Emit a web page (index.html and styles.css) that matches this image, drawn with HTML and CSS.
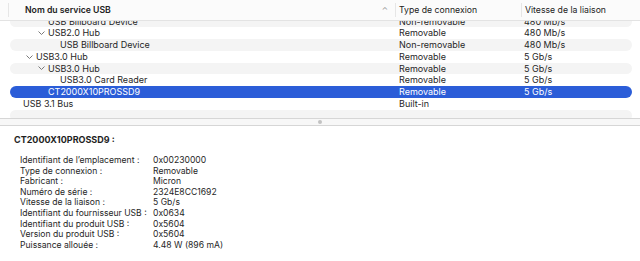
FILE: index.html
```html
<!DOCTYPE html>
<html lang="fr">
<head>
  <meta charset="UTF-8">
  <title>Informations système - USB</title>
  <link rel="stylesheet" href="styles.css">
</head>
<body>
  <div class="fenetre">
    <div class="tableau">
      <div class="entete">
        <div class="col-nom">
          <span>Nom du service USB</span>
          <span class="tri">&#8963;</span>
        </div>
        <div class="col-type">Type de connexion</div>
        <div class="col-vitesse">Vitesse de la liaison</div>
      </div>
      <div class="corps">
        <div class="liste">
          <div class="ligne raye">
            <div class="nom n2">USB Billboard Device</div>
            <div>Non-removable</div>
            <div>480 Mb/s</div>
          </div>
          <div class="ligne">
            <div class="nom n2"><span class="chevron"><svg width="7" height="4" viewBox="0 0 7 4"><polyline points="0.5,0.5 3.5,3.5 6.5,0.5" /></svg></span>USB2.0 Hub</div>
            <div>Removable</div>
            <div>480 Mb/s</div>
          </div>
          <div class="ligne raye">
            <div class="nom n3">USB Billboard Device</div>
            <div>Non-removable</div>
            <div>480 Mb/s</div>
          </div>
          <div class="ligne">
            <div class="nom n1"><span class="chevron"><svg width="7" height="4" viewBox="0 0 7 4"><polyline points="0.5,0.5 3.5,3.5 6.5,0.5" /></svg></span>USB3.0 Hub</div>
            <div>Removable</div>
            <div>5 Gb/s</div>
          </div>
          <div class="ligne raye">
            <div class="nom n2"><span class="chevron"><svg width="7" height="4" viewBox="0 0 7 4"><polyline points="0.5,0.5 3.5,3.5 6.5,0.5" /></svg></span>USB3.0 Hub</div>
            <div>Removable</div>
            <div>5 Gb/s</div>
          </div>
          <div class="ligne">
            <div class="nom n3">USB3.0 Card Reader</div>
            <div>Removable</div>
            <div>5 Gb/s</div>
          </div>
          <div class="ligne choisie">
            <div class="nom n2">CT2000X10PROSSD9</div>
            <div>Removable</div>
            <div>5 Gb/s</div>
          </div>
          <div class="ligne">
            <div class="nom n0">USB 3.1 Bus</div>
            <div>Built-in</div>
            <div></div>
          </div>
          <div class="ligne raye">
            <div class="nom n0"></div>
            <div></div>
            <div></div>
          </div>
        </div>
      </div>
    </div>

    <div class="separateur"><span class="poignee"></span></div>

    <div class="details">
      <h2>CT2000X10PROSSD9 :</h2>
      <dl class="infos">
        <dt>Identifiant de l’emplacement :</dt><dd>0x00230000</dd>
        <dt>Type de connexion :</dt><dd>Removable</dd>
        <dt>Fabricant :</dt><dd>Micron</dd>
        <dt>Numéro de série :</dt><dd>2324E8CC1692</dd>
        <dt>Vitesse de la liaison :</dt><dd>5 Gb/s</dd>
        <dt>Identifiant du fournisseur USB :</dt><dd>0x0634</dd>
        <dt>Identifiant du produit USB :</dt><dd>0x5604</dd>
        <dt>Version du produit USB :</dt><dd>0x5604</dd>
        <dt>Puissance allouée :</dt><dd>4.48 W (896 mA)</dd>
      </dl>
    </div>
  </div>
</body>
</html>
```

FILE: styles.css
```css
body {
  margin: 0;
  padding: 0;
  background-color: white;
  font-family: 'Inter', 'Liberation Sans', sans-serif;
  font-size: 9px;
  color: #262626;
}

.fenetre {
  width: 640px;
  height: 261px;
  overflow: hidden;
}

/* tableau du haut */
.tableau {
  height: 118px;
  background-color: white;
}

.entete {
  height: 20px;
  display: grid;
  grid-template-columns: 395px 126px 1fr;
  align-items: center;
  border-bottom: 1px solid #e3e3e3;
  background-color: #fbfbfb;
  font-size: 8.7px;
  font-weight: 600;
  color: #222;
}

.entete > div {
  height: 14px;
  display: flex;
  align-items: center;
}

.col-nom {
  padding-left: 16px;
  padding-right: 7px;
  border-left: 1px solid #e6e6e6;
  margin-left: 8px;
}

.tri {
  margin-left: auto;
  color: #9a9a9a;
  font-weight: normal;
  font-size: 8px;
}

.col-type,
.col-vitesse {
  padding-left: 3px;
  font-weight: normal;
  border-left: 1px solid #e6e6e6;
}

.corps {
  height: 97px;
  overflow: hidden;
}

.liste {
  margin-top: -5.5px;
}

.ligne {
  height: 11.75px;
  margin: 0 8px 0 10px;
  display: grid;
  grid-template-columns: 389px 125px 1fr;
  align-items: center;
  border-radius: 6px;
  line-height: 11.75px;
  white-space: nowrap;
}

.raye {
  background-color: #f4f4f4;
}

.choisie {
  background-color: #2b5dd8;
  color: white;
}

.nom {
  display: flex;
  align-items: center;
}

.n0 { padding-left: 13px; }
.n1 { padding-left: 26px; }
.n2 { padding-left: 38px; }
.n3 { padding-left: 50px; }

.chevron {
  width: 10px;
  margin-left: -10px;
  display: flex;
  align-items: center;
}

.chevron svg {
  fill: none;
  stroke: #7a7a7a;
  stroke-width: 1;
}

/* barre de séparation */
.separateur {
  height: 6px;
  border-top: 1px solid #d6d6d6;
  border-bottom: 1px solid #d6d6d6;
  background-color: #f7f7f7;
  display: flex;
  align-items: center;
  justify-content: center;
}

.poignee {
  width: 4px;
  height: 4px;
  border-radius: 50%;
  background-color: #c2c2c2;
}

/* détails */
.details {
  padding: 8px 0 0 14px;
}

.details h2 {
  margin: 0 0 9px 0;
  font-size: 9px;
  font-weight: bold;
  line-height: 12px;
  color: #1e1e1e;
}

.infos {
  margin: 0 0 0 6px;
  display: grid;
  grid-template-columns: 133px 1fr;
  font-size: 8.6px;
  line-height: 10.6px;
}

.infos dt,
.infos dd {
  margin: 0;
  white-space: nowrap;
}
```
